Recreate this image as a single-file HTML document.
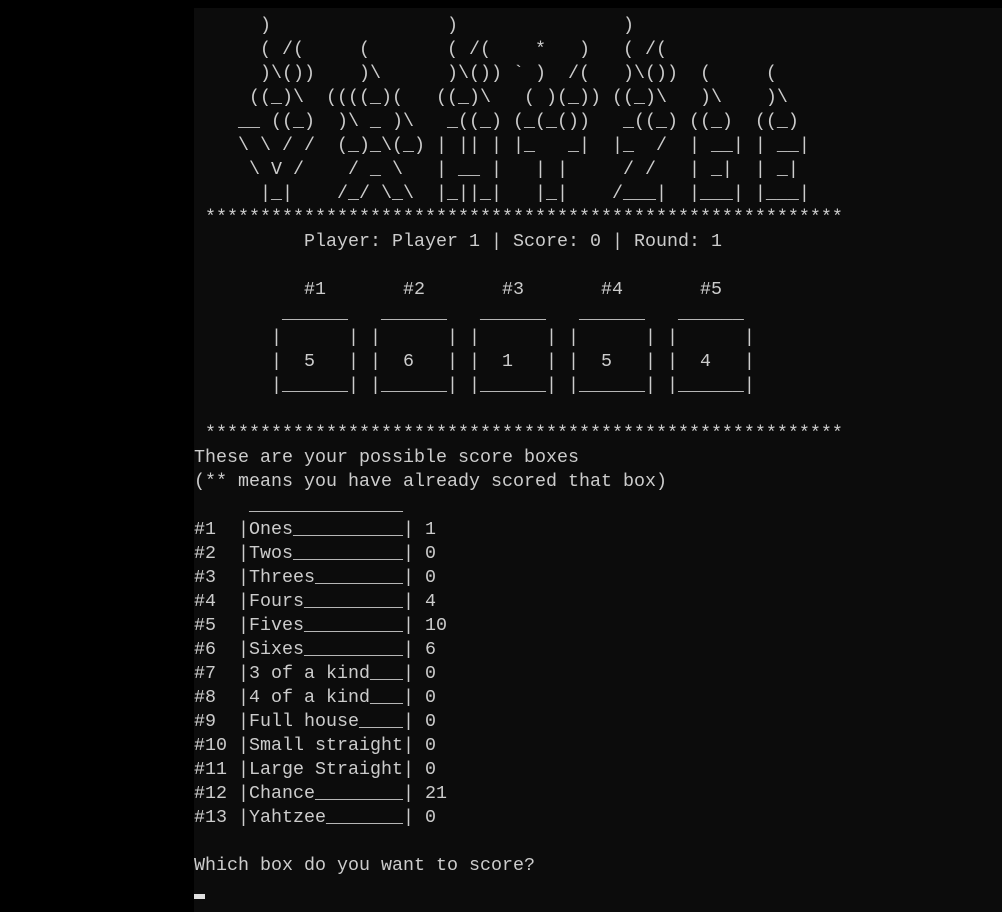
<!DOCTYPE html>
<html><head><meta charset="utf-8"><style>
html,body{margin:0;padding:0;background:#000;width:1002px;height:912px;overflow:hidden}
#t{position:absolute;left:194px;top:8px;width:808px;height:904px;background:#0c0c0c}
pre{position:absolute;left:0;top:6px;margin:0;font-family:"Liberation Mono",monospace;font-size:18.33px;line-height:24px;color:#cccccc;white-space:pre}
#cur{position:absolute;left:0;top:886px;width:11px;height:5px;background:#e0e0e0}
</style></head><body><div id="t"><pre>      )                )               )
      ( /(     (       ( /(    *   )   ( /(
      )\())    )\      )\()) ` )  /(   )\())  (     (
     ((_)\  ((((_)(   ((_)\   ( )(_)) ((_)\   )\    )\
    __ ((_)  )\ _ )\   _((_) (_(_())   _((_) ((_)  ((_)
    \ \ / /  (_)_\(_) | || | |_   _|  |_  /  | __| | __|
     \ V /    / _ \   | __ |   | |     / /   | _|  | _|
      |_|    /_/ \_\  |_||_|   |_|    /___|  |___| |___|
 **********************************************************
          Player: Player 1 | Score: 0 | Round: 1

          #1       #2       #3       #4       #5
        ______   ______   ______   ______   ______
       |      | |      | |      | |      | |      |
       |  5   | |  6   | |  1   | |  5   | |  4   |
       |______| |______| |______| |______| |______|

 **********************************************************
These are your possible score boxes
(** means you have already scored that box)
     ______________
#1  |Ones__________| 1
#2  |Twos__________| 0
#3  |Threes________| 0
#4  |Fours_________| 4
#5  |Fives_________| 10
#6  |Sixes_________| 6
#7  |3 of a kind___| 0
#8  |4 of a kind___| 0
#9  |Full house____| 0
#10 |Small straight| 0
#11 |Large Straight| 0
#12 |Chance________| 21
#13 |Yahtzee_______| 0

Which box do you want to score?</pre><div id="cur"></div></div></body></html>
